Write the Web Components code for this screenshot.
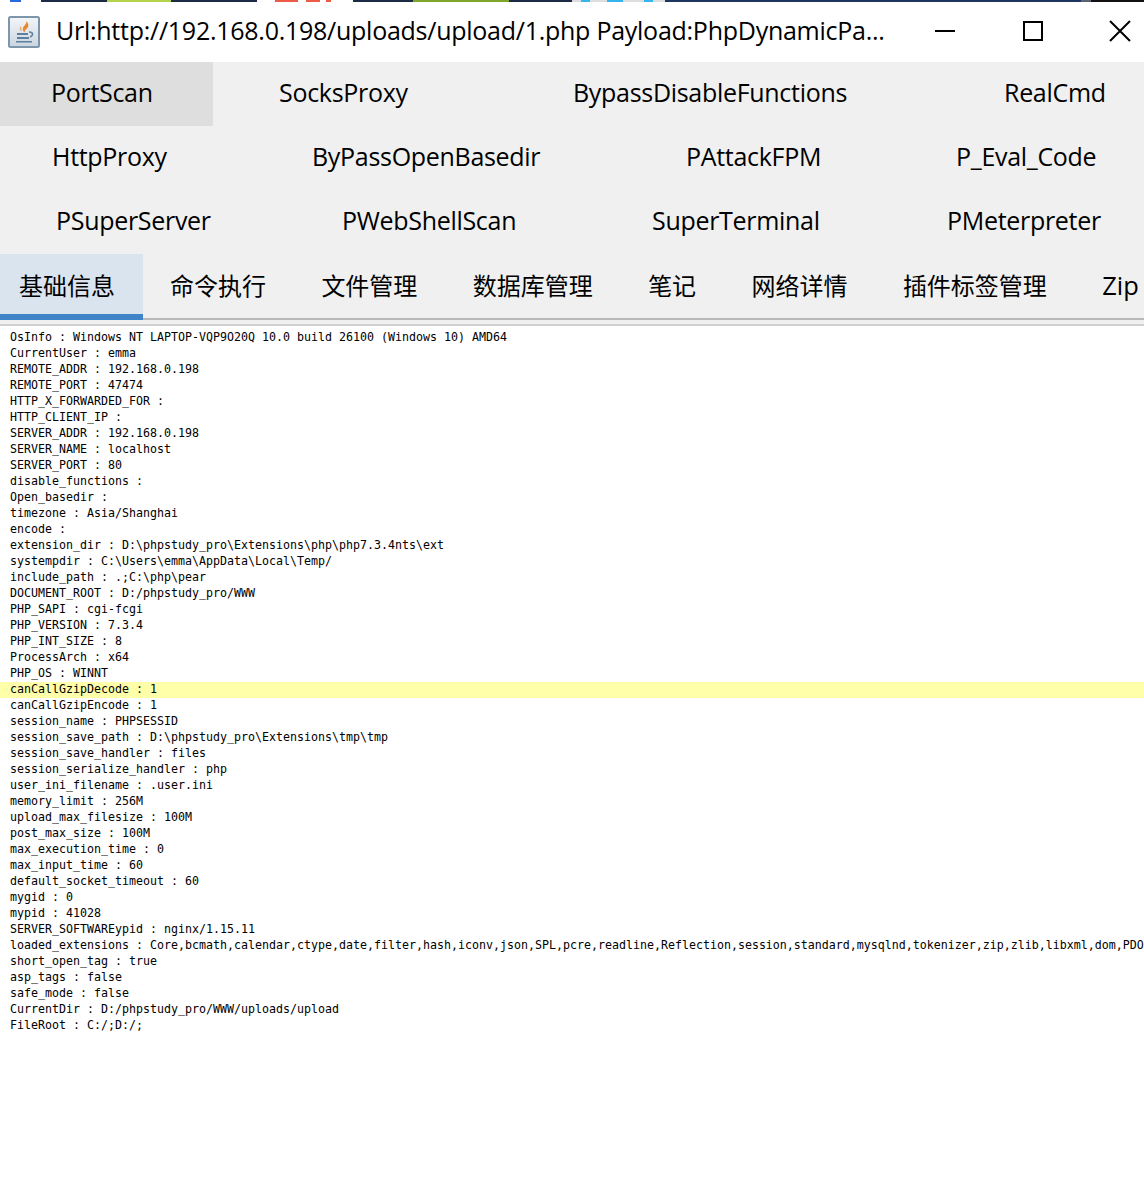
<!DOCTYPE html>
<html><head><meta charset="utf-8"><style>
html,body{margin:0;padding:0;background:#fff}
body{width:1144px;height:1196px;overflow:hidden;font-family:"Open Sans","Noto Sans CJK SC",sans-serif;color:#000}
</style></head><body>
<app-window>
<title-bar title-text="Url:http://192.168.0.198/uploads/upload/1.php Payload:PhpDynamicPa..."></title-bar>
<plugin-grid></plugin-grid>
<tab-bar></tab-bar>
<info-pane></info-pane>
</app-window>
<script>
function def(name,html,init){customElements.define(name,class extends HTMLElement{constructor(){super();this.attachShadow({mode:'open'}).innerHTML=html;}connectedCallback(){init&&init(this);}});}
def('app-window','<style>:host{display:flex;flex-direction:column;width:1144px;height:1196px;background:#fff}</style><slot></slot>');
def('title-bar',`<style>:host{display:flex;align-items:center;height:62px;box-sizing:border-box;background:#fff;position:relative;padding-top:2px}
.strip{position:absolute;left:0;right:0;top:0;height:2px;background:linear-gradient(90deg,#fff 0 10px,#2a68e0 10px 21px,#fff 21px 41px,#1c2b45 41px 107px,#b5d34a 107px 171px,#1c2b45 171px 257px,#fff 257px 275px,#ee5a48 275px 298px,#fff 298px 306px,#ee5a48 306px 320px,#fff 320px 326px,#ee5a48 326px 331px,#fff 331px 353px,#1c2b45 353px 413px,#7fa52a 413px 509px,#1c2b45 509px 572px,#ddd 572px 581px,#35b4ee 581px 590px,#ddd 590px 607px,#35b4ee 607px 623px,#ddd 623px 644px,#35b4ee 644px 653px,#ddd 653px 665px,#1d3560 665px 1081px,#5a6470 1081px 1091px,#111 1091px 1144px)}
svg{flex:none;display:block}
.icon{margin-left:8px}
.t{margin:-4px 0 0 16px;width:830px;flex:none;font:25px/36px "Open Sans",sans-serif;letter-spacing:-.26px;white-space:nowrap}
</style><div class="strip"></div>
<svg class="icon" width="32" height="32" viewBox="0 0 32 32"><defs><linearGradient id="g" x1="0" y1="0" x2="0" y2="1"><stop offset="0" stop-color="#f4f6f8"/><stop offset="1" stop-color="#c9d5e0"/></linearGradient></defs><rect x="1" y="1" width="30" height="30" rx="1.5" fill="url(#g)" stroke="#7d96ac" stroke-width="2"/><path d="M18 5c2 3-4 5-3 9 0 1 1 2 2 2-1-3 5-4 3-8 0-1-1-2-2-3z" fill="#e8862a"/><path d="M13 10c-2 2-1 4 0 5l1-1c-1-1-1-2-1-4z" fill="#f0a860"/><path d="M9 17h11v2H9zM9 21h12v2H9zM8 25h16v1.500H8z" fill="#5d7f9e"/><path d="M21 16c4 0 5 3 1 5" fill="none" stroke="#5d7f9e" stroke-width="1.500"/></svg>
<div class="t"></div>
<svg style="margin-left:49px;margin-top:-2px" width="20" height="20" viewBox="0 0 20 20"><path d="M0 10h20" stroke="#000" stroke-width="2"/></svg>
<svg style="margin-left:68px;margin-top:-2px" width="20" height="20" viewBox="0 0 20 20"><rect x="1" y="1" width="18" height="18" fill="none" stroke="#000" stroke-width="2"/></svg>
<svg style="margin-left:65px;margin-top:-2px" width="24" height="24" viewBox="0 0 24 24"><path d="M2 2l20 20M22 2L2 22" stroke="#000" stroke-width="2"/></svg>`,
el=>{el.shadowRoot.querySelector('.t').textContent=el.getAttribute('title-text');});
def('plugin-btn',`<style>:host{display:block;height:64px;flex:none;box-sizing:border-box;font:25px/61px "Open Sans",sans-serif;letter-spacing:-.3px;white-space:nowrap}
:host([active]){background:#dedede}</style><slot></slot>`);
def('plugin-grid',`<style>:host{display:block;background:#f0f0f0;height:192px}.r{display:flex}</style><div id="g"></div>`,el=>{
const rows=[[['PortScan',51,213,1],['SocksProxy',66,360],['BypassDisableFunctions',0,431],['RealCmd',0,139]],
[['HttpProxy',52,312],['ByPassOpenBasedir',0,374],['PAttackFPM',0,270],['P_Eval_Code',0,187]],
[['PSuperServer',56,342],['PWebShellScan',0,310],['SuperTerminal',0,295],['PMeterpreter',0,196]]];
const g=el.shadowRoot.getElementById('g');
rows.forEach(r=>{const d=document.createElement('div');d.className='r';r.forEach(([t,l,w,a])=>{const b=document.createElement('plugin-btn');b.textContent=t;b.style.paddingLeft=l+'px';b.style.width=w+'px';if(a)b.setAttribute('active','');d.appendChild(b);});g.appendChild(d);});});
def('tab-item',`<style>:host{display:block;flex:none;height:66px;box-sizing:border-box;font:24px/63px "Open Sans","Noto Sans CJK SC",sans-serif;white-space:nowrap;padding:0 27.7px}
:host([active]){background:#d9e4ee;border-bottom:6px solid #3f83c9;padding:0 28px 0 19px;margin-right:-.7px}
:host([latin]){font-size:25.500px}</style><slot></slot>`);
def('tab-bar',`<style>:host{display:flex;height:72px;box-sizing:border-box;background:#f0f0f0;overflow:hidden;border-bottom:2px solid #d0d0d0;position:relative}
.l{position:absolute;left:0;right:0;top:64px;height:2px;background:#b8b8b8}
tab-item{position:relative}</style><div class="l"></div><slot></slot><tab-item active>基础信息</tab-item><tab-item>命令执行</tab-item><tab-item>文件管理</tab-item><tab-item>数据库管理</tab-item><tab-item>笔记</tab-item><tab-item>网络详情</tab-item><tab-item>插件标签管理</tab-item><tab-item latin>Zip</tab-item>`);
const text=`OsInfo : Windows NT LAPTOP-VQP9O20Q 10.0 build 26100 (Windows 10) AMD64
CurrentUser : emma
REMOTE_ADDR : 192.168.0.198
REMOTE_PORT : 47474
HTTP_X_FORWARDED_FOR : 
HTTP_CLIENT_IP : 
SERVER_ADDR : 192.168.0.198
SERVER_NAME : localhost
SERVER_PORT : 80
disable_functions : 
Open_basedir : 
timezone : Asia/Shanghai
encode : 
extension_dir : D:\\phpstudy_pro\\Extensions\\php\\php7.3.4nts\\ext
systempdir : C:\\Users\\emma\\AppData\\Local\\Temp/
include_path : .;C:\\php\\pear
DOCUMENT_ROOT : D:/phpstudy_pro/WWW
PHP_SAPI : cgi-fcgi
PHP_VERSION : 7.3.4
PHP_INT_SIZE : 8
ProcessArch : x64
PHP_OS : WINNT
canCallGzipDecode : 1
canCallGzipEncode : 1
session_name : PHPSESSID
session_save_path : D:\\phpstudy_pro\\Extensions\\tmp\\tmp
session_save_handler : files
session_serialize_handler : php
user_ini_filename : .user.ini
memory_limit : 256M
upload_max_filesize : 100M
post_max_size : 100M
max_execution_time : 0
max_input_time : 60
default_socket_timeout : 60
mygid : 0
mypid : 41028
SERVER_SOFTWAREypid : nginx/1.15.11
loaded_extensions : Core,bcmath,calendar,ctype,date,filter,hash,iconv,json,SPL,pcre,readline,Reflection,session,standard,mysqlnd,tokenizer,zip,zlib,libxml,dom,PDO
short_open_tag : true
asp_tags : false
safe_mode : false
CurrentDir : D:/phpstudy_pro/WWW/uploads/upload
FileRoot : C:/;D:/;`;
def('info-pane',`<style>:host{display:block;padding-top:4px;font:11.63px/14px "DejaVu Sans Mono","Liberation Mono",monospace;overflow:hidden}
.l{height:16px;padding-left:10px;white-space:pre}.h{background:#ffffaa}</style><div id="o"></div>`,el=>{
const o=el.shadowRoot.getElementById('o');text.split('\n').forEach(s=>{const d=document.createElement('div');d.className='l'+(s.startsWith('canCallGzipDecode')?' h':'');d.textContent=s;o.appendChild(d);});});
</script>
</body></html>
